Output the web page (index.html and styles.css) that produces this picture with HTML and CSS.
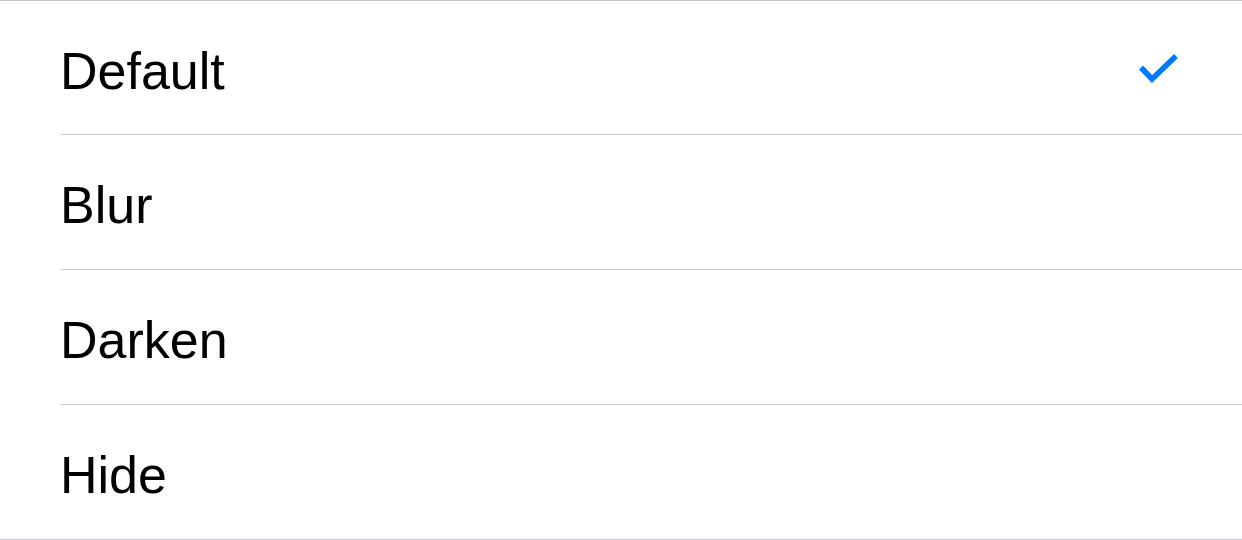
FILE: index.html
```html
<!DOCTYPE html>
<html>
<head>
<meta charset="utf-8">
<link rel="stylesheet" href="styles.css">
</head>
<body>
<div class="list">
  <div class="row first"><span class="label">Default</span>
    <svg class="check" width="40" height="32" viewBox="0 0 40 32"><polyline points="3,16.5 14,28 38,5" fill="none" stroke="#007aff" stroke-width="5.5" stroke-linecap="butt" stroke-linejoin="miter"/></svg>
  </div>
  <div class="row"><span class="label">Blur</span></div>
  <div class="row"><span class="label">Darken</span></div>
  <div class="row last"><span class="label">Hide</span></div>
</div>
</body>
</html>
```
FILE: styles.css
```css
html, body {
  margin: 0;
  padding: 0;
  background: #ffffff;
}
body {
  width: 1242px;
  height: 540px;
  overflow: hidden;
  font-family: "Liberation Sans", Arial, sans-serif;
}
.list {
  border-top: 1px solid #c8c7cc;
  border-bottom: 1px solid #c8c7cc;
}
.row {
  margin-left: 60px;
  height: 135px;
  box-sizing: border-box;
  display: flex;
  align-items: center;
  justify-content: space-between;
  padding: 8px 64px 0 0;
  border-bottom: 1px solid #c8c7cc;
}
.row.first {
  height: 134px;
}
.row.last {
  border-bottom: none;
  height: 134px;
}
.label {
  font-size: 52px;
  color: #000000;
  line-height: 1.15;
}
.check {
  display: block;
  margin-top: -9px;
}
```
